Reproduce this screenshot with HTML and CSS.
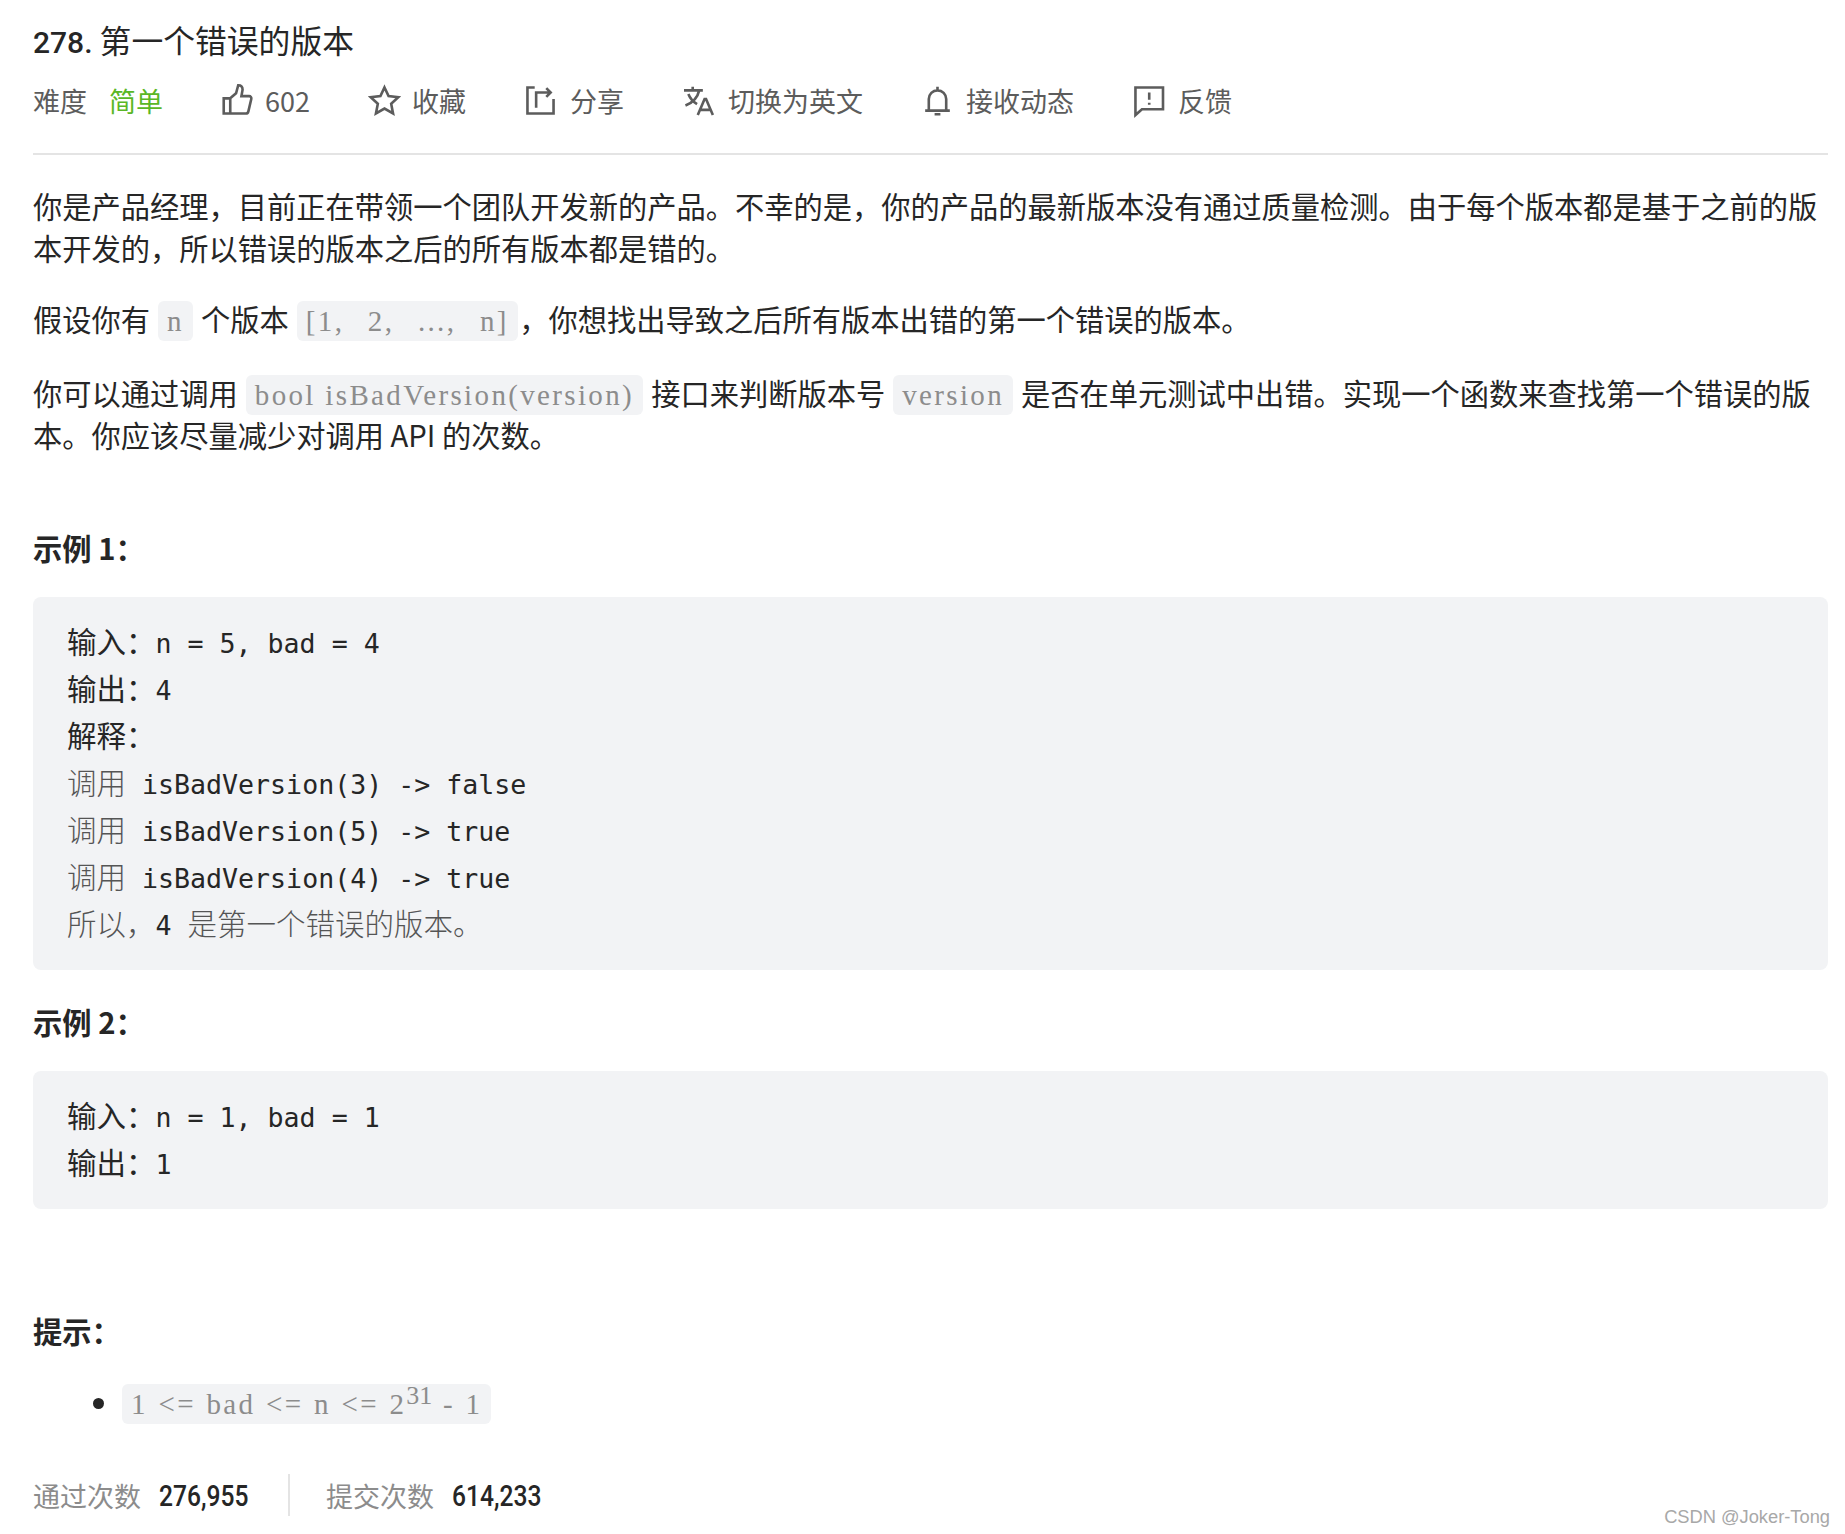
FILE: index.html
```html
<!DOCTYPE html>
<html lang="zh-CN">
<head>
<meta charset="utf-8">
<title>278. 第一个错误的版本</title>
<link rel="stylesheet" href="styles.css">
</head>
<body>
<main class="question">
  <h1 class="title"><span class="num">278.</span> 第一个错误的版本</h1>
  <div class="meta">
    <span class="item level"><span>难度</span><span class="easy">简单</span></span>
    <span class="item close"><svg class="ic" viewBox="2 2 20 20"><path d="M2.500 10.500h4.500v10.500H2.500zM7 10.500l4-3.500 1.500-5.500c1.800 0 3 1.200 3 3l-.8 4.500h5.300c1 0 1.800.9 1.500 2l-2 8.500c-.2.800-.9 1.500-1.800 1.500H7"/></svg><span>602</span></span>
    <span class="item close"><svg class="ic" viewBox="2 2 20 20"><path d="M12 3l2.800 6 6.700.8-4.900 4.500 1.300 6.600L12 17.600l-5.900 3.300 1.300-6.600-4.900-4.500 6.700-.8z"/></svg><span>收藏</span></span>
    <span class="item"><svg class="ic" viewBox="2 2 20 20"><path d="M8 3H3v18h18V11M9 17V6.500h9.500M16 3.500l3 3-3 3"/></svg><span>分享</span></span>
    <span class="item"><svg class="ic" viewBox="2 2 20 20"><path d="M2 5h13M8 2.500V5M12.500 5c-1 4.500-4.500 8.500-9.500 10.500M5 7.500c1.200 3 3.500 5.500 6 7M11.500 22l4.700-11h1l4.700 11M13.300 18.500h7"/></svg><span>切换为英文</span></span>
    <span class="item bell"><svg class="ic" viewBox="2 2 20 20"><path d="M3.500 19h17M6 19v-8a6 6 0 0 1 12 0v8M12 2.500V5M10 21.500h4"/></svg><span>接收动态</span></span>
    <span class="item"><svg class="ic" viewBox="2 2 20 20"><path d="M3 3h19v15H7.500L3 22zM12.500 6.500v5M12.500 13.500v1.500"/></svg><span>反馈</span></span>
  </div>
  <div class="content">
    <p>你是产品经理，目前正在带领一个团队开发新的产品。不幸的是，你的产品的最新版本没有通过质量检测。由于每个版本都是基于之前的版本开发的，所以错误的版本之后的所有版本都是错的。</p>
    <p class="second">假设你有 <code>n</code> 个版本 <code class="wide">[1, 2, ..., n]</code>，你想找出导致之后所有版本出错的第一个错误的版本。</p>
    <p>你可以通过调用 <code>bool isBadVersion(version)</code> 接口来判断版本号 <code>version</code> 是否在单元测试中出错。实现一个函数来查找第一个错误的版本。你应该尽量减少对调用 API 的次数。</p>
    <p class="head first"><strong>示例 1：</strong></p>
    <pre><span class="zh">输入：</span>n = 5, bad = 4
<span class="zh">输出：</span>4
<span class="zh">解释：</span>
<span class="zh thin">调用</span> isBadVersion(3) -&gt; false
<span class="zh thin">调用</span> isBadVersion(5) -&gt; true
<span class="zh thin">调用</span> isBadVersion(4) -&gt; true
<span class="zh thin">所以，</span>4 <span class="zh thin">是第一个错误的版本。</span></pre>
    <p class="head"><strong>示例 2：</strong></p>
    <pre><span class="zh">输入：</span>n = 1, bad = 1
<span class="zh">输出：</span>1</pre>
    <p class="head hint"><strong>提示：</strong></p>
    <ul><li><code class="limit">1 &lt;= bad &lt;= n &lt;= 2<sup>31</sup> - 1</code></li></ul>
  </div>
  <div class="stats">
    <span class="stat"><span class="label">通过次数</span><span class="val">276,955</span></span>
    <span class="stat second"><span class="label">提交次数</span><span class="val">614,233</span></span>
  </div>
</main>
<div class="mark">CSDN @Joker-Tong</div>
</body>
</html>
```
FILE: styles.css
```css
* { box-sizing: border-box; }
html, body { margin: 0; padding: 0; background: #fff; }
body {
  position: relative;
  height: 1534px;
  overflow: hidden;
  color: #262626;
  font-family: "Noto Sans CJK SC", "Noto Sans", sans-serif;
}
.question { padding: 0 17px 0 33px; }
.title {
  margin: 0;
  padding-top: 18px;
  font-size: 31.800px;
  line-height: 42px;
  font-weight: 400;
  color: #262626;
}
.num { font-family: Roboto, sans-serif; font-weight: 500; font-size: 30px; }
.meta {
  display: flex;
  align-items: center;
  gap: 60px;
  height: 91px;
  padding-bottom: 17px;
  border-bottom: 2px solid #e4e4e4;
  font-size: 27px;
  color: #5c5c5c;
}
.item { display: flex; align-items: center; gap: 15px; }
.item.level { gap: 22px; }
.item.close { gap: 13px; }
.item.bell { gap: 14px; }
.easy { color: #5ab726; }
.ic {
  width: 29px;
  height: 29px;
  fill: none;
  stroke: #5c5c5c;
  stroke-width: 1.800;
  overflow: visible;
}
.content { font-size: 29.250px; line-height: 42px; color: #262626; padding-top: 28.500px; }
.content p { margin: 0 0 29px; }
.content p.second { margin-bottom: 32px; }
code {
  font-family: "Liberation Serif", serif;
  font-size: 29px;
  line-height: 1;
  letter-spacing: 2.350px;
  color: #8c8c8c;
  background: #f2f3f5;
  border-radius: 6px;
  padding: 4px 9px;
  margin: 0 1.500px;
}
code.wide { word-spacing: 14px; }
code.limit { word-spacing: 1px; margin: 0; }
sup { font-size: 26px; line-height: 0; vertical-align: 10px; letter-spacing: 0; }
.head { line-height: 40px; }
.head strong { font-weight: 700; font-size: 29.250px; }
.content p.first { margin: 72px 0 30px; }
.content p.head { margin-bottom: 30px; }
pre {
  margin: 0 0 31px;
  padding: 23px 34px 21px;
  background: #f2f3f5;
  border-radius: 8px;
  font-family: "DejaVu Sans Mono", "Noto Sans CJK SC", monospace;
  font-size: 26.600px;
  line-height: 47px;
  color: #262626;
}
.zh { font-family: "Noto Sans CJK SC", sans-serif; font-size: 29.500px; line-height: 1; }
.thin { font-weight: 300; color: #555; }
.content p.hint { margin-top: 101.500px; margin-bottom: 31px; }
ul { margin: 0; padding-left: 89px; }
li { line-height: 40px; }
.stats { display: flex; align-items: center; margin-top: 53px; height: 42px; font-size: 27px; }
.stat { display: flex; align-items: center; gap: 18px; }
.stat.second { margin-left: 37px; padding-left: 36px; border-left: 2px solid #e4e4e4; height: 42px; }
.label { color: #8c8c8c; }
.val {
  display: inline-block;
  width: 92px;
  white-space: nowrap;
  font-family: Roboto, sans-serif;
  font-weight: 500;
  font-size: 30px;
  color: #262626;
  transform: scaleX(.82);
  transform-origin: left center;
}
.mark {
  position: absolute;
  right: 15px;
  bottom: 6px;
  font-family: "Liberation Sans", sans-serif;
  font-size: 18.300px;
  color: #a8a8a8;
}
```
